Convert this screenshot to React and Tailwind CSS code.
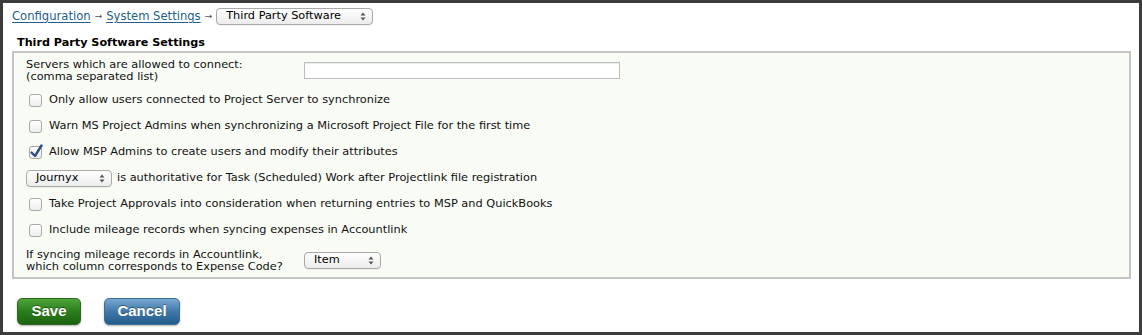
import { useState } from "react";

const font = { fontFamily: '"DejaVu Sans", Verdana, sans-serif' };

function Arrows() {
  return (
    <svg className="w-[6px] h-[9px] shrink-0" viewBox="0 0 6 9" fill="#555">
      <path d="M3 0.5L5.5 3.5H0.5z" />
      <path d="M3 8.5L0.5 5.5H5.5z" />
    </svg>
  );
}

function FakeSelect({ value, className }) {
  return (
    <div
      className={`h-[17px] flex items-center justify-between pl-[9px] pr-[6px] rounded-[4px] border border-[#a9a9a9] bg-gradient-to-b from-white to-[#ececec] shadow-[0_1px_0_rgba(0,0,0,0.05)] text-[11.3px] text-black ${className}`}
    >
      <span>{value}</span>
      <Arrows />
    </div>
  );
}

function Check({ checked, onClick }) {
  return (
    <button
      onClick={onClick}
      className="w-[13px] h-[13px] shrink-0 rounded-[3px] border border-[#a8a8a8] bg-gradient-to-b from-white to-[#ededed] relative"
    >
      {checked && (
        <svg className="absolute -left-[1px] -top-[3px] w-[14px] h-[15px]" viewBox="0 0 14 15">
          <path d="M2.5 8.5L6 12L12.5 1.5" fill="none" stroke="#2d4f86" strokeWidth="2.4" strokeLinecap="round" strokeLinejoin="round" />
        </svg>
      )}
    </button>
  );
}

function CheckRow({ label, checked, onToggle }) {
  return (
    <div className="h-[26px] flex items-center pl-[3px] gap-[7px]">
      <Check checked={checked} onClick={onToggle} />
      <span>{label}</span>
    </div>
  );
}

export default function App() {
  const [checks, setChecks] = useState({ a: false, b: false, c: true, d: false, e: false });
  const toggle = (k) => setChecks({ ...checks, [k]: !checks[k] });

  return (
    <div className="w-[1142px] h-[335px] border-[3px] border-[#3c3c3c] bg-white text-[11.35px] text-[#111] overflow-hidden" style={font}>
      <div className="flex items-center h-[17px] mt-[5px] ml-[9px] text-[11.6px]">
        <a href="#" className="text-[#235f8f] underline underline-offset-2">Configuration</a>
        <span className="mx-[4px] text-[9px] text-[#555]">→</span>
        <a href="#" className="text-[#235f8f] underline underline-offset-2">System Settings</a>
        <span className="mx-[4px] text-[9px] text-[#555]">→</span>
        <FakeSelect value="Third Party Software" className="w-[157px]" />
      </div>

      <div className="mt-[11px] ml-[14px] font-bold text-[11.2px] leading-[14px] text-black">Third Party Software Settings</div>

      <div className="ml-[9px] mt-[1px] w-[1119px] border-2 border-[#c4c4c4] bg-[#f9fbf5] pl-[12px] pt-[5px] pb-[5px]">
        <div className="flex items-center">
          <div className="w-[278px] leading-[12px]">
            Servers which are allowed to connect:
            <br />
            (comma separated list)
          </div>
          <input className="w-[316px] h-[17px] border border-[#bdbdbd] bg-white shadow-[inset_0_1px_1px_rgba(0,0,0,0.08)] outline-none" />
        </div>

        <div className="mt-[5px]">
          <CheckRow label="Only allow users connected to Project Server to synchronize" checked={checks.a} onToggle={() => toggle("a")} />
          <CheckRow label="Warn MS Project Admins when synchronizing a Microsoft Project File for the first time" checked={checks.b} onToggle={() => toggle("b")} />
          <CheckRow label="Allow MSP Admins to create users and modify their attributes" checked={checks.c} onToggle={() => toggle("c")} />
          <div className="h-[26px] flex items-center gap-[5px]">
            <FakeSelect value="Journyx" className="w-[86px]" />
            <span>is authoritative for Task (Scheduled) Work after Projectlink file registration</span>
          </div>
          <CheckRow label="Take Project Approvals into consideration when returning entries to MSP and QuickBooks" checked={checks.d} onToggle={() => toggle("d")} />
          <CheckRow label="Include mileage records when syncing expenses in Accountlink" checked={checks.e} onToggle={() => toggle("e")} />
        </div>

        <div className="flex items-center mt-[5px]">
          <div className="w-[278px] leading-[12px]">
            If syncing mileage records in Accountlink,
            <br />
            which column corresponds to Expense Code?
          </div>
          <FakeSelect value="Item" className="w-[77px]" />
        </div>
      </div>

      <div className="flex gap-[23px] mt-[19px] ml-[14px]" style={{ fontFamily: '"Liberation Sans", Arial, sans-serif' }}>
        <button className="w-[64px] h-[27px] rounded-[5px] border border-[#2c6b1d] bg-gradient-to-b from-[#4ea53a] via-[#2b7d1c] to-[#1c6410] text-white font-bold text-[15px] shadow-[0_1px_2px_rgba(0,0,0,0.3)] [text-shadow:0_-1px_0_rgba(0,0,0,0.4)]">
          Save
        </button>
        <button className="w-[76px] h-[27px] rounded-[5px] border border-[#3b6e98] bg-gradient-to-b from-[#79a9d1] via-[#3f79a9] to-[#245c8c] text-white font-bold text-[15px] shadow-[0_1px_2px_rgba(0,0,0,0.3)] [text-shadow:0_-1px_0_rgba(0,0,0,0.4)]">
          Cancel
        </button>
      </div>
    </div>
  );
}
